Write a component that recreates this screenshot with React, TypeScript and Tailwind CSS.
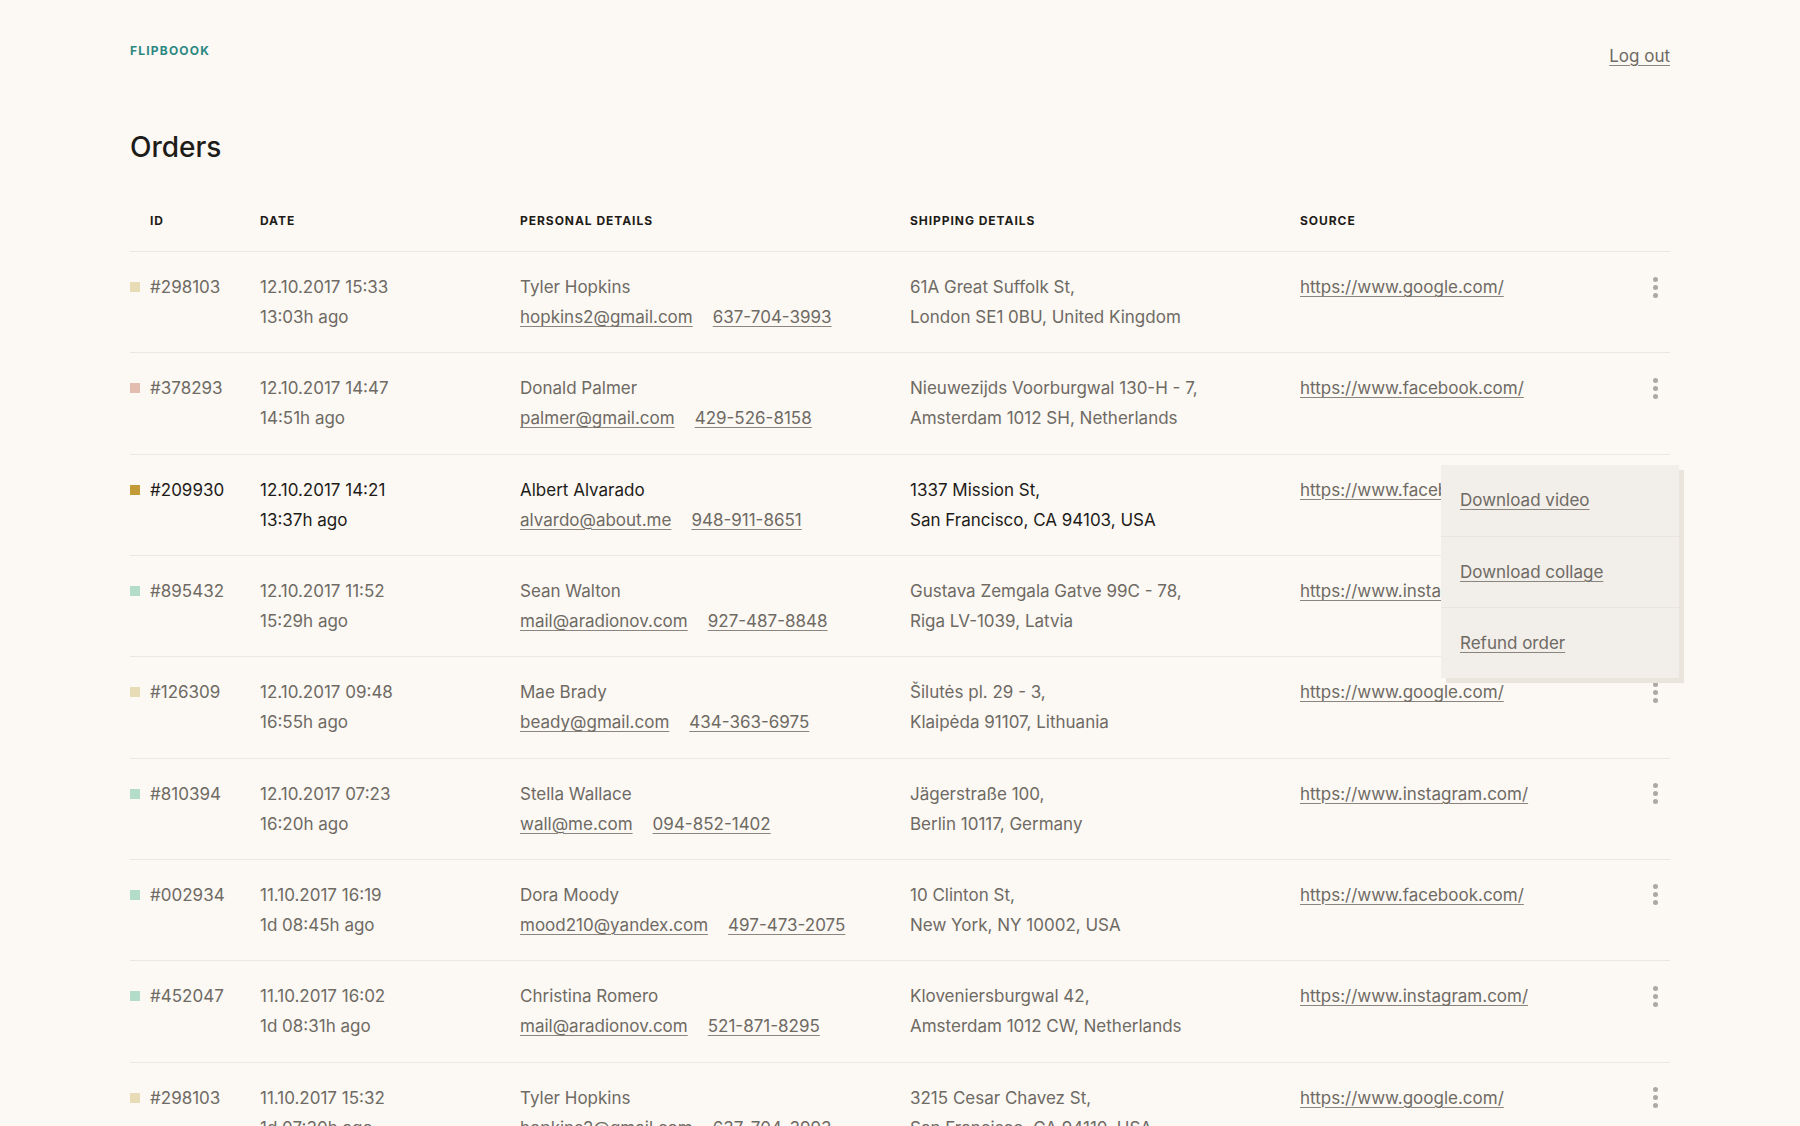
import React from "react";

type Order = {
  id: string;
  status: string;
  date: string;
  ago: string;
  name: string;
  email: string;
  phone: string;
  street: string;
  city: string;
  source: string;
};

const orders: Order[] = [
  { id: "#298103", status: "bg-[#e8dcb6]", date: "12.10.2017 15:33", ago: "13:03h ago", name: "Tyler Hopkins", email: "hopkins2@gmail.com", phone: "637-704-3993", street: "61A Great Suffolk St,", city: "London SE1 0BU, United Kingdom", source: "https://www.google.com/" },
  { id: "#378293", status: "bg-[#e3bdb0]", date: "12.10.2017 14:47", ago: "14:51h ago", name: "Donald Palmer", email: "palmer@gmail.com", phone: "429-526-8158", street: "Nieuwezijds Voorburgwal 130-H - 7,", city: "Amsterdam 1012 SH, Netherlands", source: "https://www.facebook.com/" },
  { id: "#209930", status: "bg-[#c29b36]", date: "12.10.2017 14:21", ago: "13:37h ago", name: "Albert Alvarado", email: "alvardo@about.me", phone: "948-911-8651", street: "1337 Mission St,", city: "San Francisco, CA 94103, USA", source: "https://www.facebook.com/" },
  { id: "#895432", status: "bg-[#b3dcca]", date: "12.10.2017 11:52", ago: "15:29h ago", name: "Sean Walton", email: "mail@aradionov.com", phone: "927-487-8848", street: "Gustava Zemgala Gatve 99C - 78,", city: "Riga LV-1039, Latvia", source: "https://www.instagram.com/" },
  { id: "#126309", status: "bg-[#e8dcb6]", date: "12.10.2017 09:48", ago: "16:55h ago", name: "Mae Brady", email: "beady@gmail.com", phone: "434-363-6975", street: "Šilutės pl. 29 - 3,", city: "Klaipėda 91107, Lithuania", source: "https://www.google.com/" },
  { id: "#810394", status: "bg-[#b3dcca]", date: "12.10.2017 07:23", ago: "16:20h ago", name: "Stella Wallace", email: "wall@me.com", phone: "094-852-1402", street: "Jägerstraße 100,", city: "Berlin 10117, Germany", source: "https://www.instagram.com/" },
  { id: "#002934", status: "bg-[#b3dcca]", date: "11.10.2017 16:19", ago: "1d 08:45h ago", name: "Dora Moody", email: "mood210@yandex.com", phone: "497-473-2075", street: "10 Clinton St,", city: "New York, NY 10002, USA", source: "https://www.facebook.com/" },
  { id: "#452047", status: "bg-[#b3dcca]", date: "11.10.2017 16:02", ago: "1d 08:31h ago", name: "Christina Romero", email: "mail@aradionov.com", phone: "521-871-8295", street: "Kloveniersburgwal 42,", city: "Amsterdam 1012 CW, Netherlands", source: "https://www.instagram.com/" },
  { id: "#298103", status: "bg-[#e8dcb6]", date: "11.10.2017 15:32", ago: "1d 07:30h ago", name: "Tyler Hopkins", email: "hopkins2@gmail.com", phone: "637-704-3993", street: "3215 Cesar Chavez St,", city: "San Francisco, CA 94110, USA", source: "https://www.google.com/" },
];

const cols = "grid grid-cols-[130px_260px_390px_390px_1fr_30px]";
const link = "underline decoration-[#8a857e] underline-offset-[3px] decoration-1 text-[#6e6a64]";

/* ── vertical three-dot button ─────────────────────────────────────────── */
function MoreDots() {
  return (
    <button className="flex h-[30px] w-[30px] flex-col items-center justify-center gap-[3px]" aria-label="More">
      <span className="h-[5px] w-[5px] rounded-full bg-[#aca8a2]" />
      <span className="h-[5px] w-[5px] rounded-full bg-[#aca8a2]" />
      <span className="h-[5px] w-[5px] rounded-full bg-[#aca8a2]" />
    </button>
  );
}

/* ── order actions menu ────────────────────────────────────────────────── */
function ActionsMenu() {
  const items = ["Download video", "Download collage", "Refund order"];
  return (
    <div className="absolute right-[-9px] top-[10px] z-10 w-[238px] bg-[#f2eee9] shadow-[5px_5px_0_#e9e4dc]">
      {items.map((item, i) => (
        <div
          key={item}
          className={`flex h-[71px] items-center px-[19px] ${i > 0 ? "border-t border-[#e9e4dd]" : ""}`}
        >
          <a href="#" className={`${link} text-[17px] leading-[30px]`}>
            {item}
          </a>
        </div>
      ))}
    </div>
  );
}

function OrderRow({ order, active }: { order: Order; active: boolean }) {
  const text = active ? "text-[#1e1c19]" : "text-[#6e6a64]";
  return (
    <div className={`${cols} relative border-b border-[#ece7e0] pt-5 pb-[20.33px] text-[17px] leading-[30px] ${text}`}>
      <div className="flex items-start gap-[10px]">
        <span className={`mt-[10px] h-[10px] w-[10px] ${order.status}`} />
        <span>{order.id}</span>
      </div>
      <div className="flex flex-col">
        <span>{order.date}</span>
        <span>{order.ago}</span>
      </div>
      <div className="flex flex-col">
        <span>{order.name}</span>
        <span className="flex gap-[20px]">
          <a href="#" className={link}>{order.email}</a>
          <a href="#" className={link}>{order.phone}</a>
        </span>
      </div>
      <div className="flex flex-col">
        <span>{order.street}</span>
        <span>{order.city}</span>
      </div>
      <div>
        <a href="#" className={link}>{order.source}</a>
      </div>
      <div className="flex justify-center">
        <MoreDots />
      </div>
      {active && <ActionsMenu />}
    </div>
  );
}

export default function App() {
  return (
    <div className="min-h-screen bg-[#fcf8f3] font-['Inter',sans-serif] antialiased">
      <div className="mx-auto w-[1540px]">
        {/* Top bar */}
        <header className="flex items-start justify-between pt-[43px]">
          <div className="text-[12px] font-bold leading-4 tracking-[0.1em] text-[#2b8882]">FLIPBOOOK</div>
          <a href="#" className="mt-[1px] text-[17px] leading-6 text-[#6e6a64] underline decoration-[#8a857e] underline-offset-[3px]">
            Log out
          </a>
        </header>

        <h1 className="mt-[61px] text-[28px] font-medium leading-9 text-[#1e1c19]">Orders</h1>

        {/* Table */}
        <div className="mt-[48px]">
          <div className={`${cols} border-b border-[#ece7e0] pb-[22px] text-[12px] font-bold leading-4 tracking-[0.08em] text-[#1e1c19]`}>
            <div className="pl-5">ID</div>
            <div>DATE</div>
            <div>PERSONAL DETAILS</div>
            <div>SHIPPING DETAILS</div>
            <div>SOURCE</div>
            <div />
          </div>
          {orders.map((o, i) => (
            <OrderRow key={i} order={o} active={i === 2} />
          ))}
        </div>
      </div>
    </div>
  );
}
